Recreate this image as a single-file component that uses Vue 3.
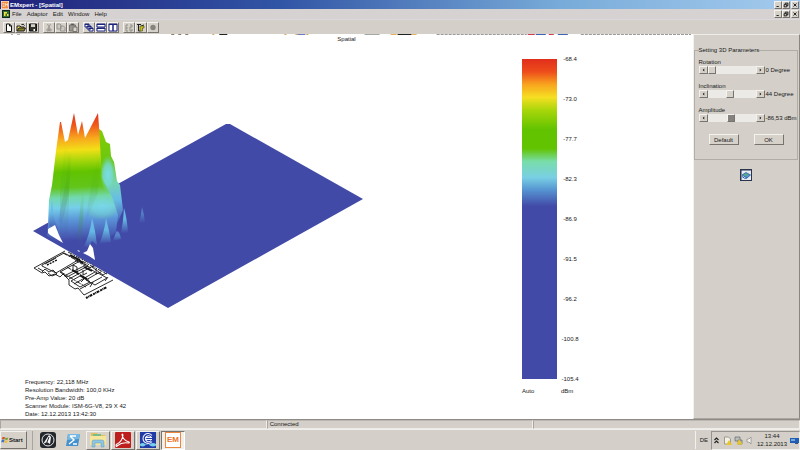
<script setup>
import { ref } from 'vue';

const menus = ['File', 'Adaptor', 'Edit', 'Window', 'Help'];

const toolGroups = [
  ['new', 'open', 'save'],
  ['cut', 'copy', 'paste'],
  ['cascade', 'rows', 'columns'],
  ['scan', 'run', 'stop']
];

const scale = ['-68.4', '-73.0', '-77.7', '-82.3', '-86.9', '-91.5', '-96.2', '-100.8', '-105.4'];

const info = [
  'Frequency: 22,118 MHz',
  'Resolution Bandwidth: 100,0 KHz',
  'Pre-Amp Value: 20 dB',
  'Scanner Module: ISM-6G-V8, 29 X 42',
  'Date: 12.12.2013 13:42:30'
];

const params = ref([
  { id: 'rotation', label: 'Rotation', min: 0, max: 100, value: 0, text: '0 Degree' },
  { id: 'inclination', label: 'Inclination', min: 0, max: 100, value: 46, text: '44 Degree' },
  { id: 'amplitude', label: 'Amplitude', min: 0, max: 100, value: 49, text: '-86,53 dBm' }
]);

const step = (p, d) => {
  p.value = Math.min(p.max, Math.max(p.min, Number(p.value) + d));
};
</script>

<template>
  <div class="app">
    <header class="titlebar">
      <svg class="logo" viewBox="0 0 8 8"><rect width="8" height="8" fill="#fff" /><rect x=".5" y=".5" width="7" height="7" fill="#f08a3c" /><path d="M1.5 2.5h2M1.5 4h2M1.5 5.5h2M4.5 5.5v-3l1 1.5 1-1.5v3" stroke="#fff" stroke-width=".6" fill="none" /></svg>
      <h1>EMxpert - [Spatial]</h1>
      <div class="win-buttons">
        <button aria-label="Minimize"><svg viewBox="0 0 8 8"><path d="M2 6h3" /></svg></button>
        <button aria-label="Restore"><svg viewBox="0 0 8 8"><path d="M3 3V1.500h3.500V5H5M1.500 3.500H5v3H1.500z" /></svg></button>
        <button class="close" aria-label="Close"><svg viewBox="0 0 8 8"><path d="M2 2l4 4M6 2L2 6" /></svg></button>
      </div>
    </header>

    <nav class="menubar">
      <svg class="logo" viewBox="0 0 8 8"><rect width="8" height="8" fill="#15241c" /><path d="M1 1h6v6H1z" fill="#2f6b35" /><path d="M2 2h3v1.500H3.500V6H2zM5 4h1.500v2H5z" fill="#f2e53a" /></svg>
      <button v-for="m in menus" :key="m" class="menu">{{ m }}</button>
      <div class="win-buttons">
        <button aria-label="Minimize document"><svg viewBox="0 0 8 8"><path d="M2 6h3" /></svg></button>
        <button aria-label="Restore document"><svg viewBox="0 0 8 8"><path d="M3 3V1.500h3.500V5H5M1.500 3.500H5v3H1.500z" /></svg></button>
        <button class="close" aria-label="Close document"><svg viewBox="0 0 8 8"><path d="M2 2l4 4M6 2L2 6" /></svg></button>
      </div>
    </nav>

    <div class="toolbar">
      <div v-for="(g, i) in toolGroups" :key="i" class="group">
        <button v-for="t in g" :key="t" class="tool" :aria-label="t">
          <svg viewBox="0 0 10 9">
            <path v-if="t === 'new'" d="M2.500 1h3l2 2v5.500h-5zM5.500 1v2h2" fill="#fff" stroke="#111" />
            <g v-else-if="t === 'open'"><path d="M1 8V3h3l1 1h3v1" fill="#e8dc50" stroke="#222" /><path d="M1 8l2-3h6.500L8 8z" fill="#8a8420" stroke="#222" /><path d="M5.500 1.500q2-1 3 1" fill="none" stroke="#111" /></g>
            <g v-else-if="t === 'save'"><path d="M1.500 1h7v7h-7z" fill="#33352c" stroke="#111" /><path d="M3 1.200h4V4H3z" fill="#d4d0c8" /><path d="M5.500 6h1.500v2H5.500z" fill="#fff" /></g>
            <path v-else-if="t === 'cut'" d="M3.500 1l2.500 5M6.500 1L4 6M3 6h1.500v2H3zM5.500 6H7v2H5.500z" fill="none" stroke="#9a9892" />
            <path v-else-if="t === 'copy'" d="M1 1h3l1 1v4H1zM4.500 3h3l1.500 1.500V8H4.500z" fill="#ccc9c2" stroke="#96948e" />
            <g v-else-if="t === 'paste'"><path d="M1.500 2h6v6h-6z" fill="#99968e" stroke="#77756f" /><path d="M3 1h3v1H3z" stroke="#777" /><path d="M5 4h4v4.500H5z" fill="#d8d5cf" stroke="#77756f" /></g>
            <g v-else-if="t === 'cascade'" fill="#fff" stroke="#1c2480"><path d="M1 1h4v3H1zM3 3h4v3H3zM5 5h4v3H5z" /><path d="M1 1.500h4M3 3.500h4M5 5.500h4" /></g>
            <path v-else-if="t === 'rows'" d="M1 1h8v3H1zM1 5h8v3H1zM1 1.500h8M1 5.500h8" fill="#fff" stroke="#1c2480" />
            <path v-else-if="t === 'columns'" d="M1 1h4v7H1zM5 1h4v7H5zM1 1.500h8" fill="#fff" stroke="#1c2480" />
            <path v-else-if="t === 'scan'" d="M2 2v6M2 2h2M2 5h2M2 8h2M6 2h2v2H6v4h2M8 6v2" fill="none" stroke="#8e8c86" />
            <g v-else-if="t === 'run'"><path d="M1 1.500h4M2.500 2v6h2M5 3l3-1" fill="none" stroke="#222" /><path d="M4 3h4v2H6.500v3H4z" fill="#c9bf22" stroke="#44461a" stroke-width=".6" /></g>
            <circle v-else cx="5" cy="4.500" r="2.700" fill="#85837e" />
          </svg>
        </button>
      </div>
    </div>

    <main class="workspace">
      <section class="plot">
        <svg class="clipped-tools" viewBox="0 0 692 1" preserveAspectRatio="none">
          <path d="M11 .5h2M17 .5h3" stroke="#b5b2b0" />
          <path d="M171 .5h20" stroke="#8c7b66" stroke-dasharray="3 4" />
          <path d="M212 .5h2M284 .5h30" stroke="#dca75c" stroke-dasharray="2 9" />
          <path d="M219 .5h8M397 .5h14" stroke="#222" />
          <path d="M297 .5h8" stroke="#6b7fc0" />
          <path d="M364 .5h15" stroke="#a3aaa6" />
          <path d="M390 .5h6M411 .5h5" stroke="#e5b45c" />
          <path d="M436 .5h90M580 .5h110" stroke="#999" stroke-dasharray="3 1" />
          <path d="M527 .5h7M548 .5h5" stroke="#d63b52" />
          <path d="M535 .5h10M557 .5h10" stroke="#3e63b4" />
        </svg>
        <h2>Spatial</h2>

        <div class="chart">
          <svg class="surface" viewBox="25 105 345 205" role="img" aria-label="Spatial emission surface">
            <defs>
              <linearGradient id="heat" gradientUnits="userSpaceOnUse" x1="80" y1="113" x2="86" y2="240">
                <stop offset="0" stop-color="#e02f1c" />
                <stop offset=".1" stop-color="#ef5a1b" />
                <stop offset=".2" stop-color="#f8a81e" />
                <stop offset=".29" stop-color="#f2df17" />
                <stop offset=".37" stop-color="#a8d70b" />
                <stop offset=".46" stop-color="#62c300" />
                <stop offset=".58" stop-color="#62c51a" />
                <stop offset=".66" stop-color="#72d9ad" />
                <stop offset=".74" stop-color="#76cfe9" />
                <stop offset=".84" stop-color="#5a94d8" />
                <stop offset="1" stop-color="#424aa8" />
              </linearGradient>
              <linearGradient id="back" gradientUnits="userSpaceOnUse" x1="102" y1="128" x2="106" y2="228">
                <stop offset="0" stop-color="#86cc05" />
                <stop offset=".36" stop-color="#68c711" />
                <stop offset=".55" stop-color="#75d5b2" />
                <stop offset=".72" stop-color="#67bce7" />
                <stop offset="1" stop-color="#424aa8" />
              </linearGradient>
              <linearGradient id="spike" x1="0" y1="0" x2="0" y2="1">
                <stop offset="0" stop-color="#6db9e7" />
                <stop offset=".45" stop-color="#65b8e4" />
                <stop offset="1" stop-color="#424aa8" />
              </linearGradient>
              <linearGradient id="ridge" x1="0" y1="0" x2="0" y2="1">
                <stop offset="0" stop-color="#4ca900" stop-opacity="0" />
                <stop offset=".5" stop-color="#3ca11b" stop-opacity=".4" />
                <stop offset="1" stop-color="#414ca8" stop-opacity=".2" />
              </linearGradient>
              <radialGradient id="haze">
                <stop offset="0" stop-color="#7addeb" />
                <stop offset=".55" stop-color="#76dad2" stop-opacity=".8" />
                <stop offset="1" stop-color="#70d48c" stop-opacity="0" />
              </radialGradient>
            </defs>

            <!-- board outline under the plane -->
            <g fill="none" stroke="#151515" stroke-width=".9">
              <path d="M34 268l31-17M34 268l8 5 3-1 4 4 6-2 5 3 3-3 6 6v5l6 4 3-1 6 7 29-15" />
              <path d="M42 265l22-12 14 7-22 13-14-7zM38 268l5 3M45 264l11-6" />
              <path d="M42 272l3-3 4 3 4-2 4 4-5 2-4-3" />
              <path d="M60 272l20-11 8 5-21 11zM64 276l20-10M69 279l24-13M74 284l21-12M80 289l22-12" />
              <path d="M63 253l28 15M68 252l27 14M75 260l22 13M82 261l25 13M67 267l23 14M61 272l25 15" stroke-dasharray="5 1 2 1" />
              <path d="M79 253l8-2M86 258l9-5 17 9M92 267l9-5 12 7-10 6zM86 280l12-7 9 5-12 7zM71 281l9-5 10 6-10 5z" />
              <path d="M70 255l10 5M76 258l7 5M84 267l8 4M72 270l7 4M80 275l7 4M89 261l7 4" stroke-width="1.800" />
              <path d="M73 265v5l4 2v-5zM83 270v5l4-2M96 269v5l5-2M81 282l4-4M90 287l3-5M105 281l3-4" />
            </g>
            <path d="M86 298l21-11" stroke="#111" stroke-width="2" stroke-dasharray="2 .5 1 .5 3 1" />
            <path d="M47 265l10-5" stroke="#111" stroke-width="1.400" stroke-dasharray="2 1" />

            <path d="M33 231L226 124l4 0L363 199 168 308z" fill="#424aa8" />

            <path d="M95 130l4-1 3 2 4 11 4 2 1 12 3 6 3 19 3 4 3 25-6 14-20 2z" fill="url(#back)" />
            <path d="M48 225l1-25 3-15 4-34 4-29h1l4 20 3-2 6-27 4 22 4-14 3 17 13-25 1 13 3 52 10 19 6 18-2 17-16 15-10 8-12-7-8 3-12-8-11-7z" fill="url(#heat)" />
            <path d="M65 143l5 12-2 80-8 0 0-45z" fill="url(#ridge)" opacity=".4" />
            <path d="M69 153l3-2-3 42-7 31-4-3 8-40z" fill="url(#ridge)" opacity=".6" />
            <path d="M82 190l2 3-2 54-5-7z" fill="url(#ridge)" opacity=".7" />
            <path d="M100 153l-2 40-13 31 8-51z" fill="url(#ridge)" opacity=".35" />
            <ellipse cx="108" cy="174" rx="8" ry="19" fill="url(#haze)" />
            <ellipse cx="102" cy="207" rx="17" ry="13" fill="url(#haze)" opacity=".55" />

            <path d="M52 199l2 19 4 12-9-4z" fill="url(#spike)" opacity=".8" />
            <path d="M92 218q3 10 5 27l-5-4-4 7-4-2q6-12 8-28z" fill="url(#spike)" />
            <path d="M106 218q3 11 5 24l-12 2q5-10 7-26z" fill="url(#spike)" />
            <path d="M116 232q3-3 5 7l-8 2z" fill="url(#spike)" opacity=".55" />
            <path d="M124 208q3 10 4 25h-7q2-9 3-25z" fill="url(#spike)" />
            <path d="M142 207q2 6 3 16h-6q2-7 3-16z" fill="url(#spike)" opacity=".45" />

            <path d="M48 229l7-4 4 10 4 8-13-8-2-2zM83 253l4-2 3-7 3 4 2 12-6-4zM77 250l3 1-1 1z" fill="#fff" />
          </svg>

          <div class="info">
            <p v-for="line in info" :key="line">{{ line }}</p>
          </div>
        </div>

        <div class="legend">
          <div class="legend-bar"></div>
          <div class="legend-scale">
            <span v-for="s in scale" :key="s">{{ s }}</span>
          </div>
          <span class="unit">Auto</span>
          <span class="unit">dBm</span>
        </div>
      </section>

      <aside class="side">
        <fieldset>
          <legend>Setting 3D Parameters</legend>
          <div v-for="p in params" :key="p.id" class="param">
            <label :for="p.id">{{ p.label }}</label>
            <div class="param-row">
              <div class="scroller" :class="{ active: p.id === 'amplitude' }">
                <button :aria-label="'Decrease ' + p.label" @click="step(p, -1)"><svg viewBox="0 0 8 8"><path d="M5 2L3 4l2 2z" /></svg></button>
                <input :id="p.id" v-model="p.value" type="range" :min="p.min" :max="p.max">
                <button :aria-label="'Increase ' + p.label" @click="step(p, 1)"><svg viewBox="0 0 8 8"><path d="M3 2l2 2-2 2z" /></svg></button>
              </div>
              <output :for="p.id">{{ p.text }}</output>
            </div>
          </div>
          <div class="actions">
            <button>Default</button>
            <button>OK</button>
          </div>
        </fieldset>
        <button class="view3d" aria-label="3D view">
          <svg viewBox="0 0 12 12"><rect width="12" height="12" fill="#28344d" /><path d="M1.500 1.500H11V11H1.500z" fill="#e9edf2" /><path d="M2 6l4-2.500L10.500 6 7 9z" fill="#4e9ac2" stroke="#1d4d9b" stroke-width=".7" /><path d="M3 7l3-3 2 2z" fill="#5cae75" /><path d="M2 7.500q3 3 5 1.500" fill="none" stroke="#2660b5" /></svg>
        </button>
      </aside>
    </main>

    <footer class="status">
      <span></span>
      <span>Connected</span>
      <span></span>
    </footer>

    <div class="taskbar">
      <button class="start">
        <svg viewBox="0 0 9 9"><path d="M1.500 1.500q1.500-1 3 0L4 4Q2.500 3 1 4z" fill="#dd4b28" /><path d="M5 1.700q1.500 1 3.200 0L7.600 4q-1.500 1-3.100 0z" fill="#69a836" /><path d="M.9 4.500q1.500-1 3 0l-.6 2.700q-1.500-1-3 0z" fill="#3974c9" /><path d="M4.300 4.700q1.500 1 3.200 0L7 7.300q-1.500 1-3.200 0z" fill="#f3bd2d" /></svg>
        Start
      </button>
      <div class="apps">
        <button class="pinned" aria-label="Ink tool">
          <svg viewBox="0 0 16 16"><rect width="16" height="16" rx="3" fill="#24272c" /><circle cx="8" cy="8" r="6" fill="none" stroke="#e6e8ea" /><path d="M3 12L9 3l2 2-1 7-3-2z" fill="#f4f4f4" /><path d="M7 10l2-5" stroke="#222" /></svg>
        </button>
        <button class="pinned" aria-label="PowerShell">
          <svg viewBox="0 0 16 16"><path d="M3 2h12l-2 12H1z" fill="#4391cd" /><path d="M3 2h12l-1 5L2 8z" fill="#75b9e2" /><path d="M5 4l4 4-5 4M8 12h4M5 4h6" fill="none" stroke="#fff" stroke-width="1.400" /></svg>
        </button>
        <button class="task" aria-label="Explorer">
          <svg viewBox="0 0 16 16"><path d="M1 1h6l1 2h7v10H1z" fill="#e7bd55" /><path d="M3 2h8v3H3z" fill="#75bd8c" /><path d="M0 4h16v9H0z" fill="#f6e69c" /><path d="M2 15v-5q0-2 2-2h8q2 0 2 2v5h-3v-4H5v4z" fill="#8fc5df" stroke="#5b9fbd" stroke-width=".5" /></svg>
        </button>
        <button class="task" aria-label="Reader">
          <svg viewBox="0 0 16 16"><rect width="16" height="16" rx="1" fill="#bd1e1e" /><path d="M2 12q5-2 6-9-1-2-1 0 1 5 7 7 1 1-1 1-6-1-11 3-1 1-1-1z" fill="none" stroke="#fff" stroke-width="1.100" /></svg>
        </button>
        <button class="task" aria-label="Signal tool">
          <svg viewBox="0 0 16 16"><rect width="16" height="16" fill="#203aa6" /><path d="M12 3.500A5 5 0 1 0 12 9.500M11 5a3 3 0 1 0 0 3.500M5 5.500h7M5 7.500h7" fill="none" stroke="#f2f5ff" stroke-width="1.100" /><path d="M0 12q3-2 5 0t5 0 6 0v1.500q-3 2-6 0t-5 0-5 0z" fill="#78cfeb" /></svg>
        </button>
        <button class="task pressed" aria-label="EMxpert"><span class="em">EM</span></button>
      </div>
      <span class="lang">DE</span>
      <div class="tray">
        <button aria-label="Show hidden icons"><svg viewBox="0 0 9 9"><path d="M2.500 4L4.500 2l2 2M2.500 7l2-2 2 2" fill="none" stroke="#222" stroke-width="1.200" /></svg></button>
        <svg viewBox="0 0 9 9"><path d="M1.500 8V1h4l2 2v5z" fill="#f2f0e5" stroke="#8a897d" stroke-width=".8" /><path d="M6 4L9 9H3z" fill="#e9c62c" /></svg>
        <svg viewBox="0 0 9 9"><path d="M1 1h5v4H1zM4 4h4v4H4z" fill="#b9bfc0" stroke="#6d7474" stroke-width=".8" /><path d="M5 3l3.500 5.500h-6z" fill="#e7c429" /></svg>
        <svg viewBox="0 0 9 9"><path d="M2 3h2l2-2v7L4 6H2z" fill="#f4f3ef" stroke="#8b8983" stroke-width=".7" /></svg>
        <div class="clock"><time>13:44</time><time>12.12.2013</time></div>
        <svg viewBox="0 0 9 9"><path d="M0 2h9v5H0z" fill="#225db4" /><path d="M1 3h4v2H1z" fill="#75aadc" /><path d="M5 7h3v1H5z" fill="#3a5477" /></svg>
      </div>
    </div>
  </div>
</template>

<style>
html, body { margin: 0; background: #d4d0c8; }
</style>

<style scoped>
.app { min-height: 100vh; display: flex; flex-direction: column; background: #d4d0c9; color: #181818; font: 6px/8px "Liberation Sans", Arial, sans-serif; overflow: hidden; }
button, input { font: inherit; color: inherit; box-sizing: border-box; margin: 0; padding: 0; }
button { background: #d6d2ca; border: 1px solid; border-color: #f4f2ee #77746f #77746f #f4f2ee; }
svg { display: block; flex: none; }
h1, h2, p { margin: 0; font-weight: normal; }

.titlebar { height: 9px; display: flex; align-items: center; background: linear-gradient(90deg, #20217a, #3155a5 35%, #78abd9 70%, #a5cbee); color: #fff; padding: 0 1px; }
.titlebar h1 { flex: 1; font-size: 6px; font-weight: bold; }
.logo { width: 8px; height: 8px; margin-right: 1px; }
.win-buttons { display: flex; margin-left: auto; }
.win-buttons button { width: 8px; height: 8px; }
.win-buttons .close { margin-left: 1px; }
.win-buttons svg { width: 100%; height: 100%; stroke: #111; fill: none; stroke-width: 1.2; }

.menubar { height: 10px; display: flex; align-items: center; gap: 4px; padding: 0 1px 0 2px; background: #d5d2d1; }
.menubar .logo { margin-right: -3px; }
.menu { background: none; border: 0; font-size: 6px; padding-left: 1px; }

.toolbar { display: flex; gap: 4px; padding: 2px 3px 1px; border-top: 1px solid #d9d9dd; }
.group { display: flex; }
.tool { width: 12px; height: 11px; }
.tool svg { width: 100%; height: 100%; }

.workspace { flex: 1; display: flex; background: #d4d0c9; }
.plot { flex: 1; display: grid; grid-template-columns: 1fr 171px; grid-template-rows: auto auto 1fr; background: #fff; }
.clipped-tools { grid-column: 1 / -1; width: 100%; height: 1px; }
.plot h2 { grid-column: 1 / -1; text-align: center; font-size: 6px; }
.chart { display: flex; flex-direction: column; justify-content: space-between; padding: 62px 8px 1px 25px; }
.surface { width: 345px; height: 205px; }
.info { margin-top: 8px; }
.info p { font-size: 6px; line-height: 8px; }
.legend { display: grid; grid-template-columns: 35px 28px; grid-template-rows: 1fr auto; column-gap: 4px; padding: 12px 0 24px; }
.legend-bar { margin: 4px 0; background: linear-gradient(180deg, #e12e1c 0, #ed4d1b 4%, #f8a51e 8%, #f5df22 12%, #a8d60a 16%, #62c300 22%, #62c300 28%, #78dda9 32%, #79cfe4 37%, #5593d1 41%, #424aa8 46%, #424aa8); }
.legend-scale { display: flex; flex-direction: column; justify-content: space-between; width: 18px; text-align: center; }
.unit { padding-top: 4px; }

.side { width: 107px; box-sizing: border-box; border: 1px solid; border-color: #eeece8 #8a8781 #aaa7a0 #f3f1ed; padding: 11px 2px 0 0; display: flex; flex-direction: column; align-items: center; font-family: "Liberation Sans Narrow", "Liberation Sans", Arial, sans-serif; }
fieldset { width: 104px; box-sizing: border-box; margin: 0; padding: 4px 0 14px 4px; border: 1px solid #b1ada5; min-width: 0; }
legend { padding: 0; }
.param { display: flex; flex-direction: column; margin-bottom: 8px; }
.param-row { display: flex; align-items: center; gap: 1px; white-space: nowrap; }
.scroller { display: flex; width: 66px; height: 8px; background: #eceae6; }
.scroller button { width: 9px; height: 8px; flex: none; }
.scroller svg { width: 100%; height: 100%; fill: #111; }
.scroller input { appearance: none; flex: 1; min-width: 0; height: 8px; background: #eceae6; }
.scroller input::-webkit-slider-thumb { appearance: none; width: 8px; height: 8px; background: #d6d2ca; border: 1px solid; border-color: #f6f4f0 #77746f #77746f #f6f4f0; border-radius: 0; box-sizing: border-box; }
.scroller.active input::-webkit-slider-thumb { background: #85827d; }
.actions { display: flex; gap: 15px; margin: 12px 0 0 10px; }
.actions button { width: 30px; height: 11px; line-height: 8px; }
.view3d { width: 12px; height: 12px; margin-top: 9px; border: 0; }
.view3d svg { width: 12px; height: 12px; }

.status { display: grid; grid-template-columns: 1fr 1fr 1fr; height: 10px; box-sizing: border-box; border-top: 1px solid #8e8b86; }
.status span { padding-left: 2px; border: 1px solid; border-color: #bcb8b1 #f0eeea #eeece8 #aaa69f; line-height: 7px; }

.taskbar { display: flex; align-items: center; height: 21px; box-sizing: border-box; background: #d4d0c9; border-top: 1px solid #f0eeeb; }
.start { display: flex; align-items: center; width: 27px; height: 18px; font-weight: bold; margin-right: 5px; }
.start svg { width: 8px; height: 8px; }
.apps { display: flex; flex: 1; gap: 1px; border-left: 1px solid #aaa69f; padding-left: 3px; }
.pinned, .task { width: 24px; height: 19px; display: flex; align-items: center; justify-content: center; }
.pinned { border-color: transparent; }
.apps svg { width: 16px; height: 16px; }
.pressed { background: #f1efec; border-color: #77746f #fff #fff #77746f; }
.em { width: 14px; height: 14px; border: 1px solid #ee853d; background: #fff; color: #ed742a; font: bold 8px/14px "Liberation Sans", Arial, sans-serif; display: flex; justify-content: center; }
.lang { border-left: 1px solid #f3f1ed; padding: 5px 3px 5px 4px; }
.tray { display: flex; align-items: center; gap: 2px; height: 19px; box-sizing: border-box; border: 1px solid; border-color: #96938e #eee #eee #96938e; }
.tray button { background: none; border: 0; width: 9px; height: 9px; }
.tray svg { width: 9px; height: 9px; }
.clock { display: flex; flex-direction: column; align-items: center; padding: 0 1px; }
</style>
